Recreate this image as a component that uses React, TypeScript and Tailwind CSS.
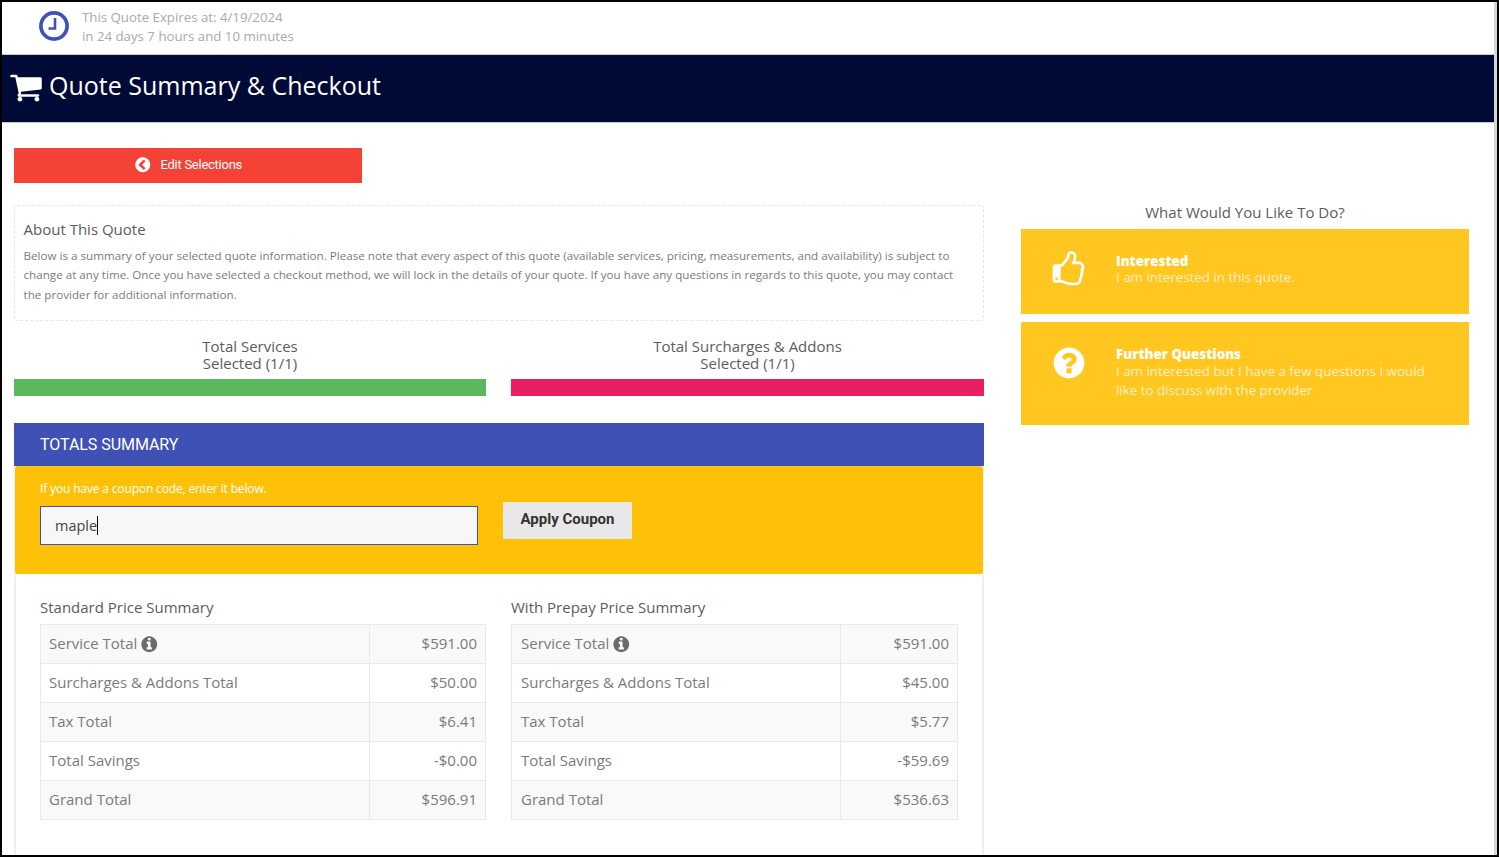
import React from "react";

const open = "font-['Open_Sans','Noto_Sans',sans-serif]";
const roboto = "font-['Roboto',sans-serif]";

const ICONS = {
  cart: "M704 1536q0 52-38 90t-90 38-90-38-38-90 38-90 90-38 90 38 38 90zm896 0q0 52-38 90t-90 38-90-38-38-90 38-90 90-38 90 38 38 90zm128-1088v512q0 24-16.500 42.500t-40.500 21.500l-1044 122q13 60 13 70 0 16-24 64h920q26 0 45 19t19 45-19 45-45 19h-1024q-26 0-45-19t-19-45q0-11 8-31.500t16-36 21.500-40 15.500-29.500l-177-823h-204q-26 0-45-19t-19-45 19-45 45-19h256q16 0 28.500 7t19.500 16.500 13 25.500 8 26.500 5.500 30 4.500 26.500h1201q26 0 45 19t19 45z",
  thumb: "M384 1344q0-26-19-45t-45-19-45 19-19 45 19 45 45 19 45-19 19-45zm1152-576q0-51-39-89.500t-89-38.500h-352q0-58 48-159.500t48-160.500q0-98-32-145t-128-47q-26 26-38 85t-30.500 125.500-59.500 109.500q-22 23-77 91-4 5-23 30t-31.500 41-34.500 42.500-40 44-38.500 35.500-40 27-35.500 9h-32v640h32q13 0 31.500 3t33 6.500 38 11 35 11.500 35.500 12.500 29 10.500q211 73 342 73h121q192 0 192-167 0-26-5-56 30-16 47.500-52.500t17.500-73.500-18-69q53-50 53-119 0-25-10-55.500t-25-47.500q32-1 53.500-47t21.500-81zm128-1q0 89-49 163 9 33 9 69 0 77-38 144 3 21 3 43 0 101-60 178 1 139-85 219.500t-227 80.500h-129q-96 0-189.500-22.500t-216.500-65.500q-116-40-138-40h-288q-53 0-90.500-37.500t-37.500-90.500v-640q0-53 37.500-90.500t90.500-37.500h274q36-24 137-155 58-75 107-128 24-25 35.500-85.500t30.500-126.500 62-108q39-37 90-37 84 0 151 32.500t102 101.500 35 186q0 93-48 192h176q104 0 180 76t76 179z",
  info: "M1152 1376v-160q0-14-9-23t-23-9h-96v-512q0-14-9-23t-23-9h-320q-14 0-23 9t-9 23v160q0 14 9 23t23 9h96v320h-96q-14 0-23 9t-9 23v160q0 14 9 23t23 9h448q14 0 23-9t9-23zm-128-896v-160q0-14-9-23t-23-9h-192q-14 0-23 9t-9 23v160q0 14 9 23t23 9h192q14 0 23-9t9-23zm640 416q0 209-103 385.500t-279.500 279.500-385.500 103-385.500-103-279.500-279.500-103-385.500 103-385.500 279.500-279.500 385.500-103 385.500 103 279.500 279.500 103 385.500z",
  question: "M1024 1376v-192q0-14-9-23t-23-9h-192q-14 0-23 9t-9 23v192q0 14 9 23t23 9h192q14 0 23-9t9-23zm256-672q0-88-55.500-163t-138.500-116-170-41q-243 0-371 213-15 24 8 42l132 100q7 6 19 6 16 0 25-12 53-68 86-92 34-24 86-24 48 0 85.500 26t37.500 59q0 38-20 61t-68 45q-63 28-115.500 86.500t-52.500 125.500v36q0 14 9 23t23 9h192q14 0 23-9t9-23q0-19 21.500-49.500t54.500-49.500q32-18 49-28.500t46-35 44.500-48 28-60.500 12.500-81zm384 192q0 209-103 385.500t-279.500 279.500-385.500 103-385.500-103-279.500-279.500-103-385.500 103-385.500 279.500-279.500 385.500-103 385.500 103 279.500 279.500 103 385.500z",
  chevron: "M1037 1395l102-102q19-19 19-45t-19-45l-307-307 307-307q19-19 19-45t-19-45l-102-102q-19-19-45-19t-45 19l-454 454q-19 19-19 45t19 45l454 454q19 19 45 19t45-19zm627-499q0 209-103 385.500t-279.500 279.500-385.500 103-385.500-103-279.500-279.500-103-385.500 103-385.500 279.500-279.500 385.500-103 385.500 103 279.500 279.500 103 385.500z",
};

function Fa({ name, className }: { name: keyof typeof ICONS; className: string }) {
  return (
    <svg viewBox="0 0 1792 1792" fill="currentColor" className={className}>
      <path d={ICONS[name]} />
    </svg>
  );
}

function PriceTable({ title, rows, className, valueW, labelPad }: { title: string; rows: [string, string, boolean?][]; className: string; valueW: string; labelPad: string }) {
  return (
    <div className={className}>
      <div className="h-[33px] pt-[6px] text-[15px] leading-[20px] text-[#5c5c5c]">{title}</div>
      <div className="border border-[#e9e9e9] border-b-0">
        {rows.map(([label, value, info], i) => (
          <div key={label} className={`flex h-[39px] border-b border-[#e9e9e9] text-[15px] text-[#7b7b7b] ${i % 2 === 0 ? "bg-[#f9f9f9]" : "bg-white"}`}>
            <div className={`flex flex-1 items-center gap-[3px] border-r border-[#e9e9e9] ${labelPad}`}>
              <span className="-mt-[2px]">{label}</span>
              {info && <Fa name="info" className="size-[18.5px] text-[#6b6b6b]" />}
            </div>
            <div className={`flex items-center justify-end pr-[8px] ${valueW}`}>
              <span className="-mt-[2px]">{value}</span>
            </div>
          </div>
        ))}
      </div>
    </div>
  );
}

function ActionCard({ icon, title, lines, className }: { icon: React.ReactNode; title: string; lines: string[]; className: string }) {
  return (
    <div className={`flex items-center bg-[#ffc720] ${className}`}>
      <div className="flex w-[95px] shrink-0 justify-center text-white">{icon}</div>
      <div className="text-[13.35px]">
        <div className="leading-[16px] font-extrabold text-white">{title}</div>
        {lines.map((l) => (
          <div key={l} className={`text-white/75 ${lines.length > 1 ? "leading-[19px]" : "leading-[16px]"}`}>{l}</div>
        ))}
      </div>
    </div>
  );
}

export default function App() {
  return (
    <div className={`flex h-[857px] w-[1499px] overflow-hidden border-2 border-black bg-white ${open}`}>
      <div className="min-w-0 flex-1">
        <div className="flex h-[52px] items-center pb-[6px]">
          <div className="flex w-[80px] justify-center pl-[24px]">
            <svg width="30" height="30" viewBox="0 0 30 30" className="mt-[1px]">
              <circle cx="15" cy="15" r="13.1" fill="none" stroke="#3f51b5" strokeWidth="3.7" />
              <path d="M16 7V17.500H9.500" fill="none" stroke="#3f51b5" strokeWidth="2.600" />
            </svg>
          </div>
          <div className="mt-[3px] text-[13.25px] leading-[19px] text-[#aaaaaa]">
            <div>This Quote Expires at: 4/19/2024</div>
            <div>in 24 days 7 hours and 10 minutes</div>
          </div>
        </div>
        <div className="flex h-[69px] items-center border-y border-[#c8c8c8] bg-[#000a36] pl-[7px] text-white">
          <Fa name="cart" className="mb-[3px] size-[34px]" />
          <span className="mb-[6px] ml-[6px] text-[25px]">Quote Summary &amp; Checkout</span>
        </div>

        <div className="flex gap-[37px] pl-[12px] pt-[25px]">
          <div className="w-[970px] shrink-0">
            <button className={`flex h-[35px] w-[348px] items-center justify-center gap-[9px] bg-[#f44336] pb-[2px] text-[13px] tracking-[-0.25px] text-white ${roboto}`}>
              <Fa name="chevron" className="size-[17.5px]" />
              <span>Edit Selections</span>
            </button>

            <div className="mt-[22px] h-[116px] rounded-[3px] border border-dashed border-[#e6e6e6] pl-[8.5px] pr-[15px] pt-[13px]">
              <div className="text-[15px] leading-[20px] text-[#5c5c5c]">About This Quote</div>
              <p className="mt-[7px] text-[11.65px] leading-[19.4px] text-[#7b7b7b]">
                Below is a summary of your selected quote information. Please note that every aspect of this quote (available services, pricing, measurements, and availability) is subject to change at any time. Once you have selected a checkout method, we will lock in the details of your quote. If you have any questions in regards to this quote, you may contact the provider for additional information.
              </p>
            </div>

            <div className="mt-[17px] grid grid-cols-[472px_473px] gap-x-[25px] text-center text-[15px] leading-[17px] text-[#5c5c5c]">
              <div>
                <div>Total Services<br />Selected (1/1)</div>
                <div className="mt-[7px] h-[17px] bg-[#5cb85c]" />
              </div>
              <div>
                <div>Total Surcharges &amp; Addons<br />Selected (1/1)</div>
                <div className="mt-[7px] h-[17px] bg-[#e91e63]" />
              </div>
            </div>

            <div className={`mt-[27px] flex h-[43px] items-center bg-[#3f51b5] pl-[26px] text-[16px] tracking-[-0.05px] text-white ${roboto}`}>TOTALS SUMMARY</div>

            <div className="border-x-2 border-[#f0f0f0] pb-[40px]">
              <div className="-ml-[1px] -mr-[1px] flex h-[108px] gap-[25px] rounded-[3px] bg-[#ffc107] pl-[25px]">
                <div className="w-[438px]">
                  <div className="mt-[15px] text-[12px] leading-[16px] tracking-[-0.15px] text-white">If you have a coupon code, enter it below.</div>
                  <div className="mt-[9px] flex h-[39px] items-center border border-[#3f51b5] bg-[#f7f7f7] pl-[14px] text-[14.5px] text-[#444]">
                    <span>maple</span>
                    <span className="h-[19px] w-[1px] bg-black" />
                  </div>
                </div>
                <button className={`mt-[36px] h-[37px] w-[129px] bg-[#e8e8e8] pb-[2px] text-[15px] font-bold text-[#333] ${roboto}`}>Apply Coupon</button>
              </div>
              <div className="flex gap-[25px] pl-[24px] pt-[17px]">
                <PriceTable
                  className="w-[446px]"
                  valueW="w-[115px]"
                  labelPad="pl-[8px]"
                  title="Standard Price Summary"
                  rows={[
                    ["Service Total", "$591.00", true],
                    ["Surcharges & Addons Total", "$50.00"],
                    ["Tax Total", "$6.41"],
                    ["Total Savings", "-$0.00"],
                    ["Grand Total", "$596.91"],
                  ]}
                />
                <PriceTable
                  className="w-[447px]"
                  valueW="w-[116px]"
                  labelPad="pl-[9px]"
                  title="With Prepay Price Summary"
                  rows={[
                    ["Service Total", "$591.00", true],
                    ["Surcharges & Addons Total", "$45.00"],
                    ["Tax Total", "$5.77"],
                    ["Total Savings", "-$59.69"],
                    ["Grand Total", "$536.63"],
                  ]}
                />
              </div>
            </div>
          </div>

          <div className="w-[448px] shrink-0">
            <div className="mt-[54px] h-[27px] text-center text-[15px] leading-[20px] text-[#5c5c5c]">What Would You Like To Do?</div>
            <ActionCard
              className="h-[85px] pb-[6px]"
              icon={<Fa name="thumb" className="mt-[2px] size-[37px]" />}
              title="Interested"
              lines={["I am interested in this quote."]}
            />
            <ActionCard
              className="mt-[8px] h-[103px] pb-[2px]"
              icon={<Fa name="question" className="mb-[20px] size-[36px]" />}
              title="Further Questions"
              lines={["I am interested but I have a few questions I would", "like to discuss with the provider"]}
            />
          </div>
        </div>
      </div>
      <div className="w-[3px] shrink-0 bg-[#d6d6d6]" />
    </div>
  );
}
